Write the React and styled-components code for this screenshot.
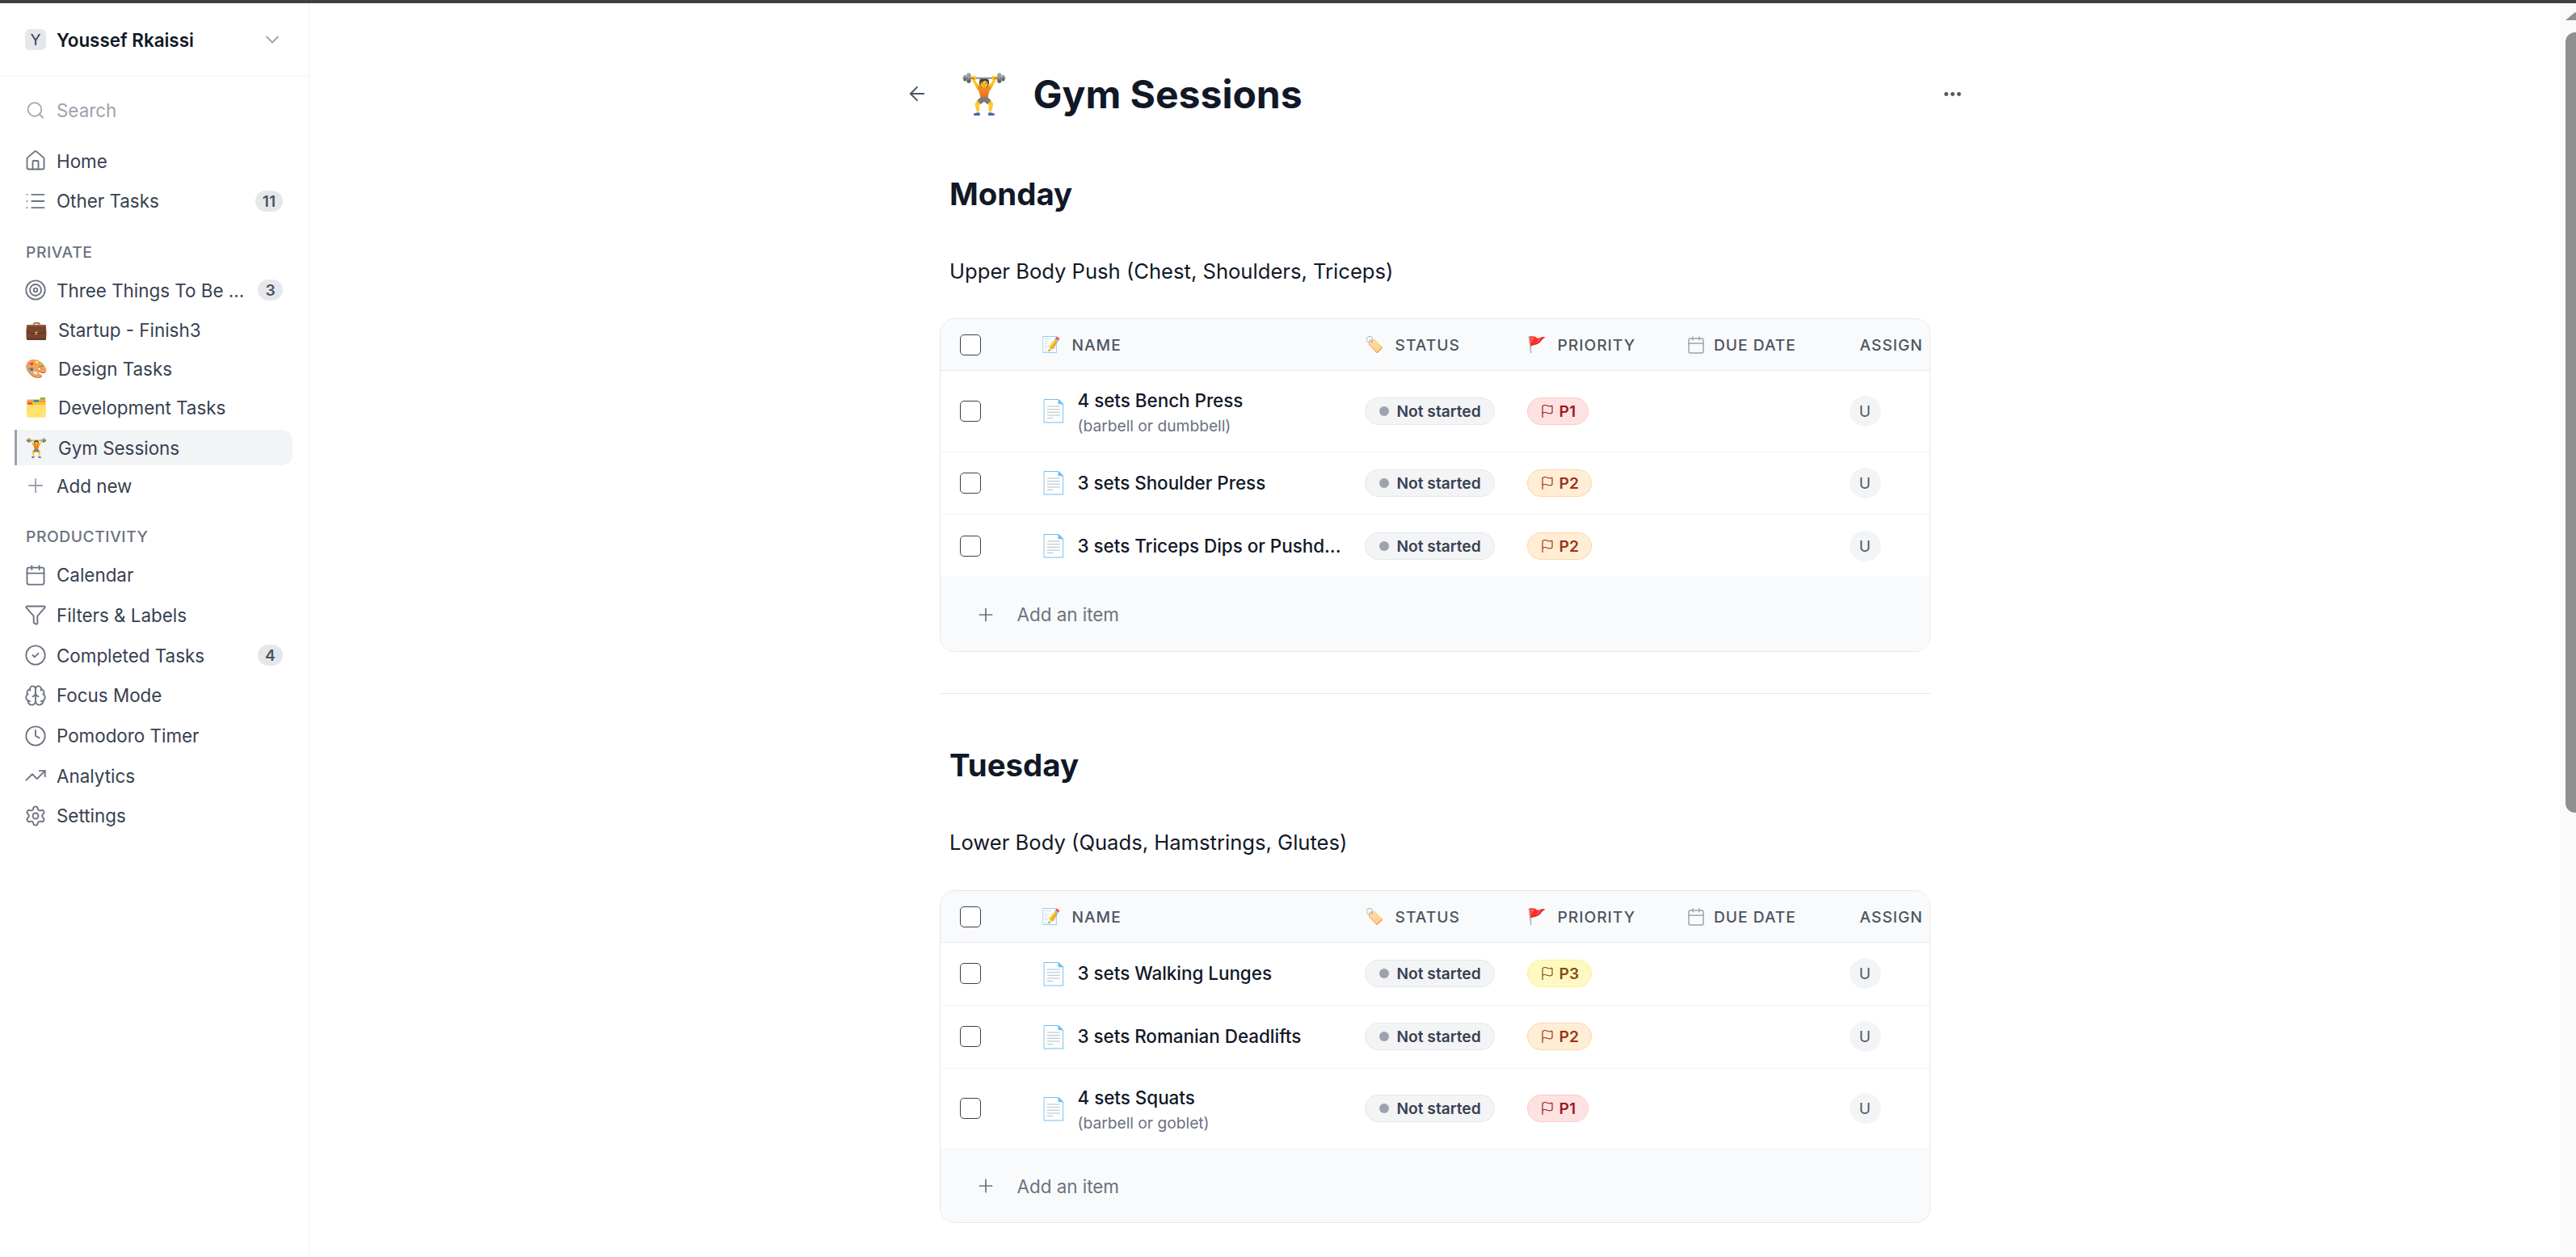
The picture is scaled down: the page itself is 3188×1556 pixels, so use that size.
import React from 'react'
import styled, { createGlobalStyle } from 'styled-components'
import {
  ArrowLeft, Brain, Calendar, ChevronDown, CircleCheck, Clock, Ellipsis, Filter, Flag,
  House, List, Plus, Search, Settings, Target, TrendingUp,
} from 'lucide-react'

const GlobalStyle = createGlobalStyle`
  html, body {
    margin: 0;
    height: 100%;
    overflow: hidden;
    background: #fff;
    font-family: Inter, "Noto Sans", sans-serif;
  }
  * { box-sizing: border-box; }
`

const Page = styled.div`
  height: 100vh;
  display: flex;
  flex-direction: column;
`

const TopStrip = styled.div`
  flex: 0 0 4px;
  background: #404040;
`

const Body = styled.div`
  flex: 1;
  display: flex;
  min-height: 0;
`

const Sidebar = styled.aside`
  flex: 0 0 383px;
  border-right: 1px solid #eeeff1;
`

const Account = styled.div`
  height: 91px;
  display: flex;
  align-items: center;
  padding: 0 31px;
  border-bottom: 1px solid #f3f4f6;
  color: #9ca3af;
`

const Avatar = styled.div`
  width: 26px;
  height: 26px;
  border-radius: 6px;
  background: #e5e7eb;
  color: #374151;
  font-size: 19.2px;
  display: flex;
  align-items: center;
  justify-content: center;
  margin-right: 13px;
`

const AccountName = styled.div`
  flex: 1;
  color: #111827;
  font-size: 22.4px;
  font-weight: 600;
`

const Nav = styled.nav`
  padding: 16.5px 20px 0 20px;
`

const NavGroup = styled.div`
  margin-top: ${p => p.$top || 0}px;
`

const NavRow = styled.div`
  position: relative;
  height: ${p => p.$emoji ? 48 : 49.7}px;
  display: flex;
  align-items: center;
  padding: 0 12px 0 10px;
  gap: 12px;
  color: ${p => p.$muted ? '#9ca3af' : '#374151'};
  font-size: 22.4px;

  svg {
    flex: 0 0 28px;
    color: #6b7280;
  }
`

const ActiveRow = styled(NavRow)`
  height: 44.5px;
  margin-top: 3.5px;
  background: #f3f4f6;
  border-radius: 3px 13px 13px 3px;

  &::before {
    content: '';
    position: absolute;
    left: -2px;
    top: 0;
    bottom: 0;
    width: 3px;
    background: #9ca3af;
  }
`

const SearchRow = styled(NavRow)`
  svg { color: #9ca3af; }
`

const AddRow = styled(NavRow)`
  svg { color: #9ca3af; }
`

const NavEmoji = styled.span`
  flex: 0 0 30px;
  text-align: center;
  font-size: 22.4px;
  line-height: 1;
`

const Badge = styled.span`
  margin-left: auto;
  height: 26px;
  min-width: 31px;
  padding: 0 9px;
  border-radius: 13px;
  background: #e5e7eb;
  color: #4b5563;
  font-size: 19.2px;
  font-weight: 600;
  display: flex;
  align-items: center;
  justify-content: center;
`

const SectionLabel = styled.div`
  height: 24px;
  margin: ${p => p.$top}px 0 ${p => p.$bottom}px 0;
  padding-left: 12px;
  color: #6b7280;
  font-size: 19.2px;
  font-weight: 500;
  letter-spacing: 0.6px;
  line-height: 24px;
`

const Main = styled.main`
  flex: 1;
  min-width: 0;
  display: flex;
  justify-content: center;
`

const Column = styled.div`
  width: 1298px;
`

const TitleRow = styled.div`
  height: 60px;
  margin-top: 82px;
  display: flex;
  align-items: center;
  color: #4b5563;
`

const BackIcon = styled(ArrowLeft)`
  margin-left: -5.5px;
`

const MoreIcon = styled(Ellipsis)`
  margin-right: -5px;
`

const PageEmoji = styled.span`
  flex: 0 0 56px;
  margin-left: 38.5px;
  font-size: 48px;
  line-height: 1;
  text-align: center;
`

const PageTitle = styled.h1`
  flex: 1;
  margin: 0 0 0 31px;
  color: #111827;
  font-size: 48px;
  font-weight: 700;
`

const Content = styled.div`
  padding: 0 36px;
`

const DayTitle = styled.h2`
  margin: ${p => p.$top}px 0 0 0;
  padding-left: 12.5px;
  color: #111827;
  font-size: 38.4px;
  line-height: 48px;
  font-weight: 700;
`

const DayFocus = styled.p`
  margin: 52px 0 ${p => p.$bottom}px 0;
  padding-left: 12.5px;
  color: #111827;
  font-size: 25.6px;
  line-height: 40px;
`

const Divider = styled.hr`
  margin: 51px 0 0 0;
  border: 0;
  border-top: 1px solid #e5e7eb;
`

const Table = styled.div`
  border: 1.5px solid #e5e7eb;
  border-radius: 19px;
  overflow: hidden;
  background: #fff;
`

const Row = styled.div`
  display: grid;
  grid-template-columns: 125px 400px 201px 200px 199px 1fr;
  align-items: center;
  height: ${p => p.$tall ? 100.5 : 77.75}px;
  border-bottom: 1px solid #f3f4f6;
`

const HeadRow = styled(Row)`
  height: 64px;
  background: #f9fafb;
  border-bottom: 1.5px solid #e5e7eb;
`

const HeadCell = styled.div`
  display: flex;
  align-items: center;
  gap: 15px;
  color: #4b5563;
  font-size: 19.2px;
  font-weight: 500;
  letter-spacing: 1px;
  white-space: nowrap;
  padding-left: ${p => p.$inset || 0}px;

  svg {
    color: #9ca3af;
    margin: 0 -4.5px 0 -3px;
  }
`

const HeadEmoji = styled.span`
  width: 23px;
  font-size: 19px;
  line-height: 1;
`

const Check = styled.input`
  appearance: none;
  display: block;
  width: 26px;
  height: 26px;
  margin: 0 0 0 24px;
  background: #fff;
  border: 1.6px solid #374151;
  border-radius: 5px;
`

const NameCell = styled.div`
  display: flex;
  align-items: center;
  margin-left: -2px;
`

const DocEmoji = styled.span`
  flex: 0 0 29px;
  margin-right: 13px;
  font-size: 27px;
  line-height: 1;
`

const TaskText = styled.div`
  margin-top: ${p => p.$tall ? 4 : 0}px;
`

const TaskName = styled.div`
  color: #111827;
  font-size: 22.4px;
  font-weight: 500;
  line-height: 32px;
  white-space: nowrap;
`

const TaskNote = styled.div`
  color: #6b7280;
  font-size: 19.2px;
  line-height: 30px;
`

const StatusPill = styled.span`
  display: inline-flex;
  align-items: center;
  gap: 10px;
  height: 34px;
  padding: 0 16px 0 17px;
  border: 1px solid #e5e7eb;
  border-radius: 17px;
  background: #f3f4f6;
  color: #374151;
  font-size: 19.2px;
  font-weight: 600;
  white-space: nowrap;
`

const StatusDot = styled.span`
  width: 12px;
  height: 12px;
  border-radius: 50%;
  background: #9ca3af;
`

const priorityColors = {
  P1: { bg: '#fee2e2', border: '#fecaca', text: '#991b1b' },
  P2: { bg: '#ffedd5', border: '#fed7aa', text: '#9a3412' },
  P3: { bg: '#fef9c3', border: '#fef08a', text: '#854d0e' },
}

const PriorityPill = styled.span`
  display: inline-flex;
  align-items: center;
  gap: 6px;
  height: 34px;
  padding: 0 15px 0 15px;
  border: 1px solid ${p => priorityColors[p.$level].border};
  border-radius: 17px;
  background: ${p => priorityColors[p.$level].bg};
  color: ${p => priorityColors[p.$level].text};
  font-size: 19.2px;
  font-weight: 600;
`

const Assignee = styled.span`
  width: 39px;
  height: 38px;
  border-radius: 50%;
  background: #f3f4f6;
  color: #4b5563;
  font-size: 19.2px;
  display: flex;
  align-items: center;
  justify-content: center;
`

const AddItem = styled.div`
  height: ${p => p.$height}px;
  display: flex;
  align-items: center;
  gap: 26px;
  padding-left: 43px;
  background: #f9fafb;
  color: #6b7280;
  font-size: 22.4px;
`

const ScrollTrack = styled.div`
  flex: 0 0 20px;
  background: #fafafa;
  overflow: hidden;
`

const ScrollArrow = styled.div`
  width: 0;
  height: 0;
  margin: 11px 0 0 7px;
  border-left: 12px solid transparent;
  border-right: 12px solid transparent;
  border-bottom: 10px solid #8f8f8f;
`

const ScrollThumb = styled.div`
  width: 26px;
  height: 966px;
  margin: 15px 0 0 7px;
  border-radius: 12px;
  background: #8f8f8f;
`

const NavItem = ({ icon: Icon, badge, children }) => (
  <NavRow>
    <Icon size={28} strokeWidth={1.6} />
    {children}
    {badge && <Badge>{badge}</Badge>}
  </NavRow>
)

const EmojiItem = ({ emoji, children }) => (
  <NavRow $emoji>
    <NavEmoji>{emoji}</NavEmoji>
    {children}
  </NavRow>
)

const TaskTable = ({ tasks, footHeight }) => (
  <Table>
    <HeadRow>
      <Check type="checkbox" />
      <HeadCell><HeadEmoji>📝</HeadEmoji>NAME</HeadCell>
      <HeadCell><HeadEmoji>🏷️</HeadEmoji>STATUS</HeadCell>
      <HeadCell><HeadEmoji>🚩</HeadEmoji>PRIORITY</HeadCell>
      <HeadCell><Calendar size={24} strokeWidth={1.5} />DUE DATE</HeadCell>
      <HeadCell $inset={13}>ASSIGN</HeadCell>
    </HeadRow>
    {tasks.map(task => (
      <Row key={task.name} $tall={!!task.note}>
        <Check type="checkbox" />
        <NameCell>
          <DocEmoji>📄</DocEmoji>
          <TaskText $tall={!!task.note}>
            <TaskName>{task.name}</TaskName>
            {task.note && <TaskNote>{task.note}</TaskNote>}
          </TaskText>
        </NameCell>
        <div>
          <StatusPill><StatusDot />Not started</StatusPill>
        </div>
        <div>
          <PriorityPill $level={task.priority}>
            <Flag size={18} strokeWidth={1.6} />
            {task.priority}
          </PriorityPill>
        </div>
        <div />
        <Assignee>U</Assignee>
      </Row>
    ))}
    <AddItem $height={footHeight}>
      <Plus size={26} strokeWidth={1.6} />
      Add an item
    </AddItem>
  </Table>
)

const monday = [
  { name: '4 sets Bench Press', note: '(barbell or dumbbell)', priority: 'P1' },
  { name: '3 sets Shoulder Press', priority: 'P2' },
  { name: '3 sets Triceps Dips or Pushd...', priority: 'P2' },
]

const tuesday = [
  { name: '3 sets Walking Lunges', priority: 'P3' },
  { name: '3 sets Romanian Deadlifts', priority: 'P2' },
  { name: '4 sets Squats', note: '(barbell or goblet)', priority: 'P1' },
]

export default function App() {
  return (
    <Page>
      <GlobalStyle />
      <TopStrip />
      <Body>
        <Sidebar>
          <Account>
            <Avatar>Y</Avatar>
            <AccountName>Youssef Rkaissi</AccountName>
            <ChevronDown size={28} strokeWidth={1.6} />
          </Account>
          <Nav>
            <SearchRow $muted>
              <Search size={25} strokeWidth={1.6} />
              Search
            </SearchRow>
            <NavGroup $top={13}>
              <NavItem icon={House}>Home</NavItem>
              <NavItem icon={List} badge="11">Other Tasks</NavItem>
            </NavGroup>
            <SectionLabel $top={26} $bottom={11}>PRIVATE</SectionLabel>
            <NavItem icon={Target} badge="3">Three Things To Be ...</NavItem>
            <EmojiItem emoji="💼">Startup - Finish3</EmojiItem>
            <EmojiItem emoji="🎨">Design Tasks</EmojiItem>
            <EmojiItem emoji="🗂️">Development Tasks</EmojiItem>
            <ActiveRow>
              <NavEmoji>🏋️</NavEmoji>
              Gym Sessions
            </ActiveRow>
            <AddRow>
              <Plus size={28} strokeWidth={1.6} />
              Add new
            </AddRow>
            <SectionLabel $top={26} $bottom={11}>PRODUCTIVITY</SectionLabel>
            <NavItem icon={Calendar}>Calendar</NavItem>
            <NavItem icon={Filter}>Filters &amp; Labels</NavItem>
            <NavItem icon={CircleCheck} badge="4">Completed Tasks</NavItem>
            <NavItem icon={Brain}>Focus Mode</NavItem>
            <NavItem icon={Clock}>Pomodoro Timer</NavItem>
            <NavItem icon={TrendingUp}>Analytics</NavItem>
            <NavItem icon={Settings}>Settings</NavItem>
          </Nav>
        </Sidebar>
        <Main>
          <Column>
            <TitleRow>
              <BackIcon size={28} strokeWidth={1.7} />
              <PageEmoji>🏋️</PageEmoji>
              <PageTitle>Gym Sessions</PageTitle>
              <MoreIcon size={27} strokeWidth={2.4} />
            </TitleRow>
            <Content>
              <DayTitle $top={70}>Monday</DayTitle>
              <DayFocus $bottom={38}>Upper Body Push (Chest, Shoulders, Triceps)</DayFocus>
              <TaskTable tasks={monday} footHeight={91} />
              <Divider />
              <DayTitle $top={64}>Tuesday</DayTitle>
              <DayFocus $bottom={39}>Lower Body (Quads, Hamstrings, Glutes)</DayFocus>
              <TaskTable tasks={tuesday} footHeight={90} />
            </Content>
          </Column>
        </Main>
        <ScrollTrack>
          <ScrollArrow />
          <ScrollThumb />
        </ScrollTrack>
      </Body>
    </Page>
  )
}
